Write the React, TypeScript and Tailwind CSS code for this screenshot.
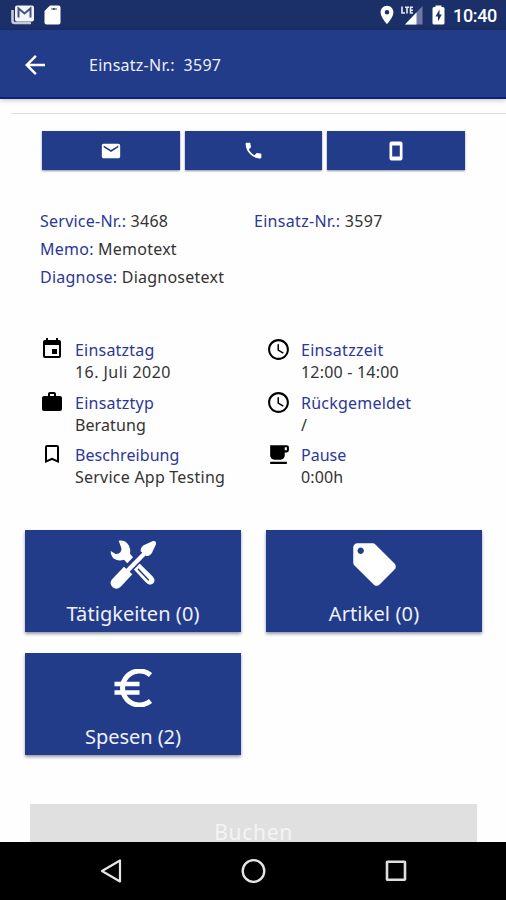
import type { ReactNode } from "react";
import {
  MdAccessTime,
  MdArrowBack,
  MdBookmarkBorder,
  MdEmail,
  MdEvent,
  MdLocalCafe,
  MdLocalOffer,
  MdLocationOn,
  MdPhone,
  MdWork,
} from "react-icons/md";

function MailStackIcon() {
  return (
    <svg width="24" height="20" viewBox="0 0 24 20">
      <path d="M1.500 5v11q0 2 2 2H20" fill="none" stroke="#c5cadb" strokeWidth="2.600" />
      <rect x="4" y="0.500" width="19" height="16" rx="2" fill="#f4f5fa" />
      <path d="M7.500 12.500V3.500l6 5L19.500 3.500v9" fill="none" stroke="#46547f" strokeWidth="2" />
    </svg>
  );
}

function SdCardIcon() {
  return (
    <svg width="17" height="20" viewBox="0 0 17 20">
      <path d="M6 0.500H14.500Q16.500 0.500 16.500 2.500V17.500Q16.500 19.500 14.500 19.500H2.500Q0.500 19.500 0.500 17.500V6Z" fill="#fff" />
      <path d="M7 4h6" stroke="#9aa3c0" strokeWidth="2" />
      <path d="M9 4h1.800" stroke="#3a4779" strokeWidth="2" />
    </svg>
  );
}

function BatteryIcon() {
  return (
    <svg width="13" height="20" viewBox="0 0 13 20">
      <path d="M3.500 2V0.500h6V2H11q1.500 0 1.500 1.500V18q0 1.500-1.500 1.500H2Q0.500 19.500 0.500 18V3.500Q0.500 2 2 2Z" fill="#fff" />
      <path d="M7.500 4.500L3.500 11.500H6V16.500L9.800 9.500H7.500Z" fill="#1b2f69" />
    </svg>
  );
}

function SignalIcon() {
  return (
    <svg width="22" height="19" viewBox="0 0 22 19">
      <path d="M21.500 0v18.500H4z" fill="#6e7aa3" />
      <path d="M15.500 6.500v12H4z" fill="#fff" />
      <path d="M1 0.500v6.500h3M4 1.200h4M6 1.200V7.500M12 1.200H9.500v5.800H12M9.500 4.200H12" fill="none" stroke="#e9ebf3" strokeWidth="1.600" />
    </svg>
  );
}

function PhoneDeviceIcon() {
  return (
    <svg width="14" height="20" viewBox="0 0 14 20">
      <rect x="0.500" y="0.500" width="13" height="19" rx="2" fill="#fff" />
      <rect x="3.200" y="4.500" width="7.600" height="11" fill="#223c8a" />
    </svg>
  );
}

function EuroIcon() {
  return (
    <svg width="38" height="38" viewBox="0 0 38 38">
      <path d="M36.500 6A17 17 0 1 0 36.500 32" fill="none" stroke="#fff" strokeWidth="5" />
      <path d="M0.500 15H25.500M0.500 23.500H25.500" stroke="#fff" strokeWidth="4.400" />
    </svg>
  );
}

function ToolsIcon() {
  return (
    <svg width="47" height="51" viewBox="300 72 141 153">
      <path
        d="M326 77Q347 74 357 92Q363 105 360 116L369 127L352 145L342 134Q326 140 312 131Q302 123 302 108L317 117Q326 118 331 112Q337 104 332 94Z"
        fill="#fff"
      />
      <path d="M374 157L411 197Q419 206 425 201Q430 196 424 189L386 151" fill="#fff" stroke="#fff" strokeWidth="12" strokeLinecap="round" strokeLinejoin="round" />
      <path d="M385 163L415 194" stroke="#223c8a" strokeWidth="4.500" strokeLinecap="round" />
      <path d="M358 163L406 112" stroke="#223c8a" strokeWidth="21" />
      <path d="M348 172L413 106" stroke="#fff" strokeWidth="13" />
      <path d="M392 109Q391 98 401 91L429 78Q440 77 438 88L426 113Q420 123 409 123Z" fill="#fff" />
      <path d="M342 155L367 178L332 215Q320 226 308 217Q297 206 305 194Z" fill="#fff" />
    </svg>
  );
}

function ActionButton({ children }: { children: ReactNode }) {
  return (
    <button className="flex flex-1 items-center justify-center bg-[#223c8a] text-white shadow-[0_1px_2px_rgba(0,0,60,0.45)]">
      {children}
    </button>
  );
}

function Info({ icon, label, value, labelTracking, valueTracking }: { icon: ReactNode; label: string; value: string; labelTracking: string; valueTracking: string }) {
  return (
    <div className="flex h-[52.600px]">
      <div className="w-[35px] shrink-0 text-black">{icon}</div>
      <div className="pt-[2px] text-base leading-[22px] whitespace-nowrap">
        <div className={`text-[#2c3798] ${labelTracking}`}>{label}</div>
        <div className={`text-[#333] ${valueTracking}`}>{value}</div>
      </div>
    </div>
  );
}

function Tile({ icon, label, tracking }: { icon: ReactNode; label: string; tracking: string }) {
  return (
    <button className="flex h-[102px] flex-col items-center bg-[#223c8a] pt-[9px] text-white shadow-[0_2px_3px_rgba(0,0,40,0.4)]">
      <span className="flex h-[52px] items-center justify-center">{icon}</span>
      <span className={`mt-[9px] text-[20px] leading-[28px] whitespace-nowrap text-[#eef0fb] ${tracking}`}>{label}</span>
    </button>
  );
}

export default function App() {
  return (
    <div className="flex h-[900px] w-[506px] flex-col overflow-hidden bg-[#fefefe] font-['Noto_Sans','Open_Sans',sans-serif]">
      <div className="flex h-[30px] shrink-0 items-center bg-[#1b2f69] pr-[9px] pl-[11px] text-white">
        <MailStackIcon />
        <span className="ml-[9px]">
          <SdCardIcon />
        </span>
        <div className="ml-auto flex items-center">
          <MdLocationOn className="size-[22px]" />
          <span className="ml-[3px]">
            <SignalIcon />
          </span>
          <span className="ml-[9px]">
            <BatteryIcon />
          </span>
          <span className="ml-[8px] pt-[2px] font-[Roboto,sans-serif] text-[18px] leading-[22px] font-medium tracking-[-0.350px]">10:40</span>
        </div>
      </div>
      <header className="flex h-[69px] shrink-0 items-center border-b-2 border-[#12207d] bg-[#223c8a] pt-[3px] pl-[20px] text-white shadow-[0_1px_5px_rgba(0,0,0,0.25)]">
        <MdArrowBack className="size-[30px]" />
        <h1 className="ml-[39px] text-[16px] tracking-[0.250px] whitespace-pre text-[#eef0fb]">{"Einsatz-Nr.:  3597"}</h1>
      </header>
      <main className="flex min-h-0 flex-1 flex-col overflow-hidden">
        <div className="mt-[14px] ml-[11px] h-px shrink-0 bg-[#dedede]" />
        <div className="mt-[17px] ml-[42px] flex h-[39px] w-[423px] shrink-0 gap-[5px]">
          <ActionButton>
            <MdEmail className="size-[22px]" />
          </ActionButton>
          <ActionButton>
            <MdPhone className="size-[21px]" />
          </ActionButton>
          <ActionButton>
            <PhoneDeviceIcon />
          </ActionButton>
        </div>
        <section className="mt-[37px] ml-[40px] shrink-0 text-[16px] leading-[28px] tracking-[0.240px] whitespace-nowrap text-[#333]">
          <div className="flex">
            <div className="w-[214px]">
              <span className="text-[#2c3798]">Service-Nr.:</span> 3468
            </div>
            <div className="tracking-[0.300px]">
              <span className="text-[#2c3798]">Einsatz-Nr.:</span> 3597
            </div>
          </div>
          <div>
            <span className="text-[#2c3798]">Memo:</span> Memotext
          </div>
          <div>
            <span className="text-[#2c3798]">Diagnose:</span> Diagnosetext
          </div>
        </section>
        <section className="mt-[46px] ml-[40px] grid shrink-0 grid-cols-[226px_1fr]">
          <Info icon={<MdEvent className="size-6" />} label="Einsatztag" value="16. Juli 2020" labelTracking="tracking-[0.200px]" valueTracking="tracking-[0.450px]" />
          <Info icon={<MdAccessTime className="size-[25px]" />} label="Einsatzzeit" value="12:00 - 14:00" labelTracking="tracking-[0.300px]" valueTracking="tracking-[0.200px]" />
          <Info icon={<MdWork className="size-6" />} label="Einsatztyp" value="Beratung" labelTracking="tracking-[0.250px]" valueTracking="tracking-[0.100px]" />
          <Info icon={<MdAccessTime className="size-[25px]" />} label="Rückgemeldet" value="/" labelTracking="tracking-[0.220px]" valueTracking="tracking-normal" />
          <Info icon={<MdBookmarkBorder className="size-6" />} label="Beschreibung" value="Service App Testing" labelTracking="tracking-[0.080px]" valueTracking="tracking-[0.230px]" />
          <Info icon={<MdLocalCafe className="size-[25px]" />} label="Pause" value="0:00h" labelTracking="tracking-normal" valueTracking="tracking-[0.100px]" />
        </section>
        <section className="mt-[35px] ml-[25px] grid w-[457px] shrink-0 grid-cols-2 gap-x-[25px] gap-y-[21px]">
          <Tile icon={<ToolsIcon />} label="Tätigkeiten (0)" tracking="tracking-[0.060px]" />
          <Tile icon={<MdLocalOffer className="size-[51px]" />} label="Artikel (0)" tracking="tracking-[0.120px]" />
          <Tile icon={<EuroIcon />} label="Spesen (2)" tracking="tracking-[-0.050px]" />
        </section>
        <button className="mt-[49px] mr-[29px] ml-[30px] flex min-h-0 flex-1 items-end justify-center bg-[#e0e0e0] text-[21px] leading-[20px] tracking-[0.700px] text-[#f4f4f4]">
          Buchen
        </button>
      </main>
      <nav className="flex h-[58px] shrink-0 items-center justify-between bg-black px-[99px]">
        <svg width="24" height="26" viewBox="0 0 24 26">
          <path d="M21 2.500v21L3 13z" fill="none" stroke="#e6e6e6" strokeWidth="2.200" strokeLinejoin="round" />
        </svg>
        <svg width="26" height="26" viewBox="0 0 26 26">
          <circle cx="13.500" cy="13" r="10.800" fill="none" stroke="#e6e6e6" strokeWidth="2.300" />
        </svg>
        <svg width="24" height="24" viewBox="0 0 24 24">
          <rect x="4" y="2.700" width="18" height="18" rx="0.500" fill="none" stroke="#dedede" strokeWidth="2.600" />
        </svg>
      </nav>
    </div>
  );
}
